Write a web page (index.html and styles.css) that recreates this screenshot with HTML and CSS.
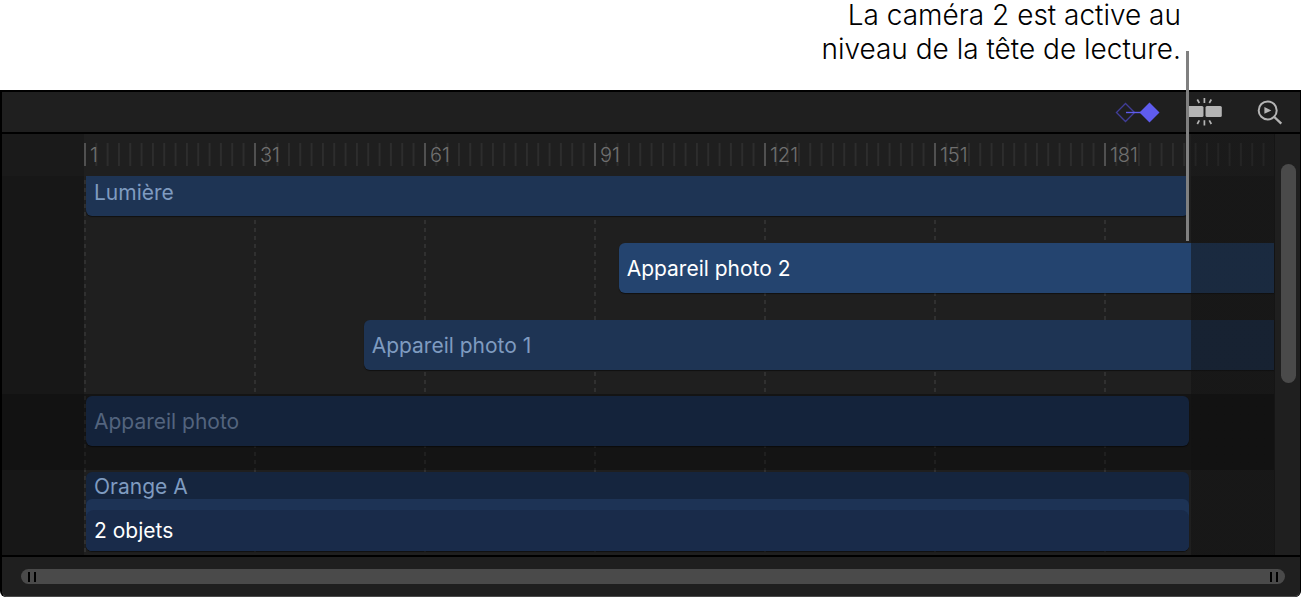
FILE: index.html
```html
<!DOCTYPE html>
<html lang="fr">
<head>
    <meta charset="UTF-8">
    <meta name="viewport" content="width=device-width, initial-scale=1.0">
    <title>Timeline - Appareil photo</title>
    <link rel="stylesheet" href="styles.css">
</head>
<body>
    <p class="caption">La caméra 2 est active au<br>niveau de la tête de lecture.</p>

    <main class="panel">
        <header class="toolbar">
            <button class="tool-btn" type="button" aria-label="Images clés">
                <svg width="50" height="40" viewBox="0 0 50 40">
                    <path d="M13.5 11.5 L22.5 20.5 L13.5 29.5 L4.5 20.5 Z" fill="none" stroke="#403d96" stroke-width="1.4"/>
                    <path d="M14 20.5 H30" stroke="#5f5cee" stroke-width="1.4"/>
                    <path d="M37.5 10.5 L47.5 20.5 L37.5 30.5 L27.5 20.5 Z" fill="#5f5cee"/>
                </svg>
            </button>
            <button class="tool-btn" type="button" aria-label="Magnétisme">
                <svg width="40" height="40" viewBox="0 0 40 40">
                    <rect x="1" y="14" width="16.5" height="11" rx="1.5" fill="#b4b4b4"/>
                    <rect x="19.5" y="14" width="16.3" height="11" rx="1.5" fill="#b4b4b4"/>
                    <path d="M18.4 6 V11 M11.3 7.5 L13.3 11 M25.3 7.5 L23.3 11 M18.4 28.3 V33.5 M11.3 32 L13.3 28.3 M25.3 32 L23.3 28.3" stroke="#b4b4b4" stroke-width="1.7"/>
                </svg>
            </button>
            <button class="tool-btn" type="button" aria-label="Zoom">
                <svg width="34" height="40" viewBox="0 0 34 40">
                    <circle cx="17.7" cy="18.4" r="9" fill="none" stroke="#b4b4b4" stroke-width="2"/>
                    <path d="M14.4 15 L21.4 18.4 L14.4 21.8 Z" fill="#b4b4b4"/>
                    <path d="M24.3 25 L31.3 31.6" stroke="#b4b4b4" stroke-width="2.4"/>
                </svg>
            </button>
        </header>

        <section class="editor">
            <div class="gutter"></div>

            <div class="timeline">
                <ol class="ruler">
                    <li>1</li>
                    <li>31</li>
                    <li>61</li>
                    <li>91</li>
                    <li>121</li>
                    <li>151</li>
                    <li>181</li>
                </ol>
                <div class="tracks">
                    <div class="track">
                        <div class="clip clip-light">Lumière</div>
                    </div>
                    <div class="track">
                        <div class="clip clip-camera2">Appareil photo 2</div>
                    </div>
                    <div class="track">
                        <div class="clip clip-camera1">Appareil photo 1</div>
                    </div>
                    <div class="track track-off">
                        <div class="clip clip-off">Appareil photo</div>
                    </div>
                    <div class="track">
                        <div class="clip clip-group">
                            <div class="group-name">Orange A</div>
                            <div class="group-body">
                                <div class="group-count">2 objets</div>
                            </div>
                        </div>
                    </div>
                </div>
                <div class="out-of-range"></div>
                <div class="playhead"></div>
            </div>

            <div class="scroll-v">
                <div class="thumb-v"></div>
            </div>
        </section>

        <footer class="zoom-bar">
            <div class="thumb-h">
                <span class="grip"></span>
                <span class="grip"></span>
            </div>
        </footer>
    </main>
</body>
</html>
```

FILE: styles.css
```css
* {
    margin: 0;
    padding: 0;
    box-sizing: border-box;
}

body {
    font-family: Inter, 'Liberation Sans', sans-serif;
    background: white;
}

.caption {
    height: 90px;
    padding-right: 120px;
    font-size: 28px;
    font-weight: 350;
    line-height: 34px;
    margin-top: -2px;
    margin-bottom: 2px;
    text-align: right;
    color: black;
}

.panel {
    background: #1f1f1f;
    border: solid black;
    border-width: 2px 1px 0 2px;
    border-radius: 0 0 6px 6px;
    box-shadow: inset 0 -1px 0 #4a4a4a;
}

/* Toolbar */
.toolbar {
    display: flex;
    justify-content: flex-end;
    gap: 24px;
    height: 42px;
    padding-right: 16px;
    border-bottom: 2px solid black;
}

.tool-btn {
    background: none;
    border: none;
    cursor: pointer;
}

.tool-btn svg {
    display: block;
}

/* Editor: gutter, timeline, scroll bar */
.editor {
    display: grid;
    grid-template-columns: 82px 1fr 26px;
    border-bottom: 2px solid black;
}

.gutter {
    background: linear-gradient(#1a1a1a 42px, #171717 42px 260px, #121212 260px 336px, #171717 336px);
}

.timeline {
    position: relative;
}

.ruler {
    display: grid;
    grid-template-columns: repeat(7, 1fr);
    padding: 9px 0 10px;
    list-style: none;
}

.ruler li {
    height: 23px;
    padding-left: 4px;
    border-left: 2px solid #505050;
    font-size: 20px;
    font-weight: 300;
    line-height: 24px;
    color: #707070;
    background: linear-gradient(to right, #2d2d2d 2px, transparent 2px) border-box 0 0 / calc(100% / 15) 100%;
}

/* Vertical guide lines, cut into dashes by stripes of the background colour */
.tracks {
    display: grid;
    grid-template-rows: 65px 77px 76px 76px 85px;
    background:
        repeating-linear-gradient(to bottom, #1f1f1f 0 4px, transparent 4px 8px),
        linear-gradient(to right, #303030 2px, #1f1f1f 2px) 0 0 / calc(100% / 7) 100%;
}

/* One column per frame */
.track {
    display: grid;
    grid-template-columns: repeat(210, 1fr);
    align-items: start;
    padding-top: 2px;
}

.track:first-child {
    padding-top: 0;
}

.track-off {
    background: rgba(0, 0, 0, 0.35);
}

.clip {
    height: 50px;
    margin-left: 2px;
    padding-left: 8px;
    border-radius: 6px;
    box-shadow: 0 1px 1px rgba(0, 0, 0, 0.5);
    font-size: 21px;
    line-height: 51px;
    white-space: nowrap;
    color: #7f9bc0;
    background: #1e3454;
}

.clip-light {
    grid-column: 1 / 196;
    height: 40px;
    line-height: 33px;
    border-radius: 0 0 6px 6px;
}

.clip-camera2 {
    grid-column: 95 / 211;
    border-radius: 6px 0 0 6px;
    color: white;
    background: #24446f;
}

.clip-camera1 {
    grid-column: 50 / 211;
    border-radius: 6px 0 0 6px;
}

.clip-off {
    grid-column: 1 / 196;
    color: #53647e;
    background: #14233b;
}

.clip-group {
    grid-column: 1 / 196;
    height: 79px;
    padding: 0;
    overflow: hidden;
    line-height: 30px;
    background: #15253e;
}

.group-name {
    height: 27px;
    padding-left: 8px;
}

.group-body {
    padding-top: 11px;
    border-radius: 6px 6px 0 0;
    background: #1d3355;
}

.group-count {
    height: 41px;
    padding-left: 8px;
    border-radius: 8px 8px 0 0;
    line-height: 42px;
    color: white;
    background: #192b4a;
}

/* Frames after the end of the project */
.out-of-range {
    position: absolute;
    top: 0;
    right: 0;
    bottom: 0;
    left: 93%;
    background: linear-gradient(rgba(16, 16, 16, 0.3) 42px, rgba(16, 16, 16, 0.5) 42px);
}

.playhead {
    position: absolute;
    top: -83px;
    left: calc(100% * 195 / 210);
    width: 3px;
    height: 190px;
    margin-left: -3px;
    background: #808080;
}

/* Scroll bars */
.scroll-v {
    padding: 30px 4px 0 6px;
    border-left: 1px solid #151515;
}

.thumb-v {
    height: 219px;
    border-radius: 8px;
    background: #4a4a4a;
}

.zoom-bar {
    padding: 12px 15px 13px 19px;
}

.thumb-h {
    display: flex;
    justify-content: space-between;
    align-items: center;
    height: 15px;
    padding: 0 7px;
    border-radius: 8px;
    background: #4a4a4a;
}

.grip {
    width: 8px;
    height: 10px;
    border: solid black;
    border-width: 0 2px;
}
```
